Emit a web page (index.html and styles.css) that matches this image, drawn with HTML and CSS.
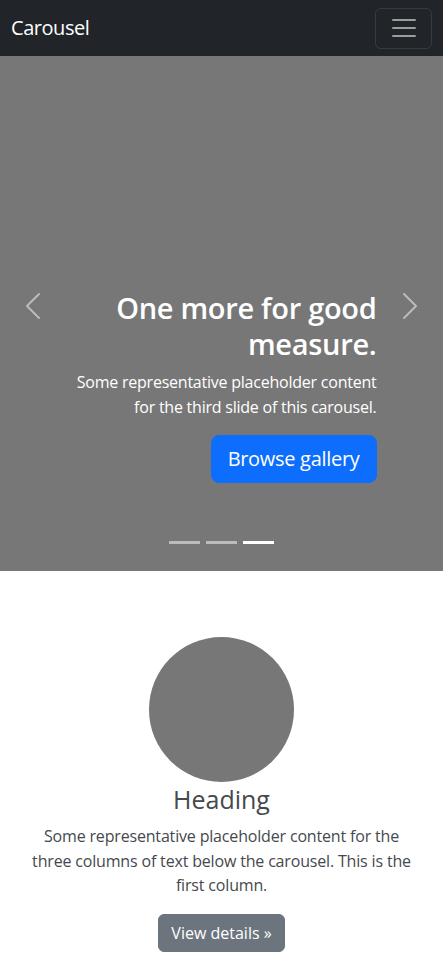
FILE: index.html
```html
<!DOCTYPE html>
<html lang="en">
<head>
<meta charset="utf-8">
<title>Carousel</title>
<link rel="stylesheet" href="styles.css">
</head>
<body>
<header class="navbar">
  <a class="brand" href="#">Carousel</a>
  <button class="toggler" type="button" aria-label="Toggle navigation">
    <svg class="toggler-icon" viewBox="0 0 30 30" width="30" height="30"><path d="M4 7h22M4 15h22M4 23h22" stroke="rgba(255,255,255,0.55)" stroke-width="2" stroke-linecap="round" fill="none"/></svg>
  </button>
</header>
<main>
  <section class="carousel">
    <div class="caption">
      <h1 class="caption-title">One more for good measure.</h1>
      <p class="caption-text">Some representative placeholder content for the third slide of this carousel.</p>
      <a class="btn btn-primary" href="#">Browse gallery</a>
    </div>
    <a class="control control-prev" href="#" aria-label="Previous">
      <svg viewBox="0 0 16 16" width="32" height="32"><path fill="#fff" d="M11.354 1.646a.5.5 0 0 1 0 .708L5.707 8l5.647 5.646a.5.5 0 0 1-.708.708l-6-6a.5.5 0 0 1 0-.708l6-6a.5.5 0 0 1 .708 0z"/></svg>
    </a>
    <a class="control control-next" href="#" aria-label="Next">
      <svg viewBox="0 0 16 16" width="32" height="32"><path fill="#fff" d="M4.646 1.646a.5.5 0 0 1 .708 0l6 6a.5.5 0 0 1 0 .708l-6 6a.5.5 0 0 1-.708-.708L10.293 8 4.646 2.354a.5.5 0 0 1 0-.708z"/></svg>
    </a>
    <div class="indicators">
      <span class="indicator"></span>
      <span class="indicator"></span>
      <span class="indicator active"></span>
    </div>
  </section>
  <section class="marketing">
    <div class="avatar"></div>
    <h2 class="col-title">Heading</h2>
    <p class="col-text">Some representative placeholder content for the three columns of text below the carousel. This is the first column.</p>
    <a class="btn btn-secondary" href="#">View details &raquo;</a>
  </section>
</main>
</body>
</html>
```
FILE: styles.css
```css
* { box-sizing: border-box; }
html, body { margin: 0; padding: 0; }
body {
  font-family: "Open Sans", "Noto Sans", sans-serif;
  font-size: 16px;
  line-height: 1.5;
  color: #212529;
  background: #fff;
  letter-spacing: -0.2px;
}
.navbar {
  height: 56px;
  background: #212529;
  display: flex;
  align-items: center;
  justify-content: space-between;
  padding: 0 11px 0 11px;
}
.brand {
  color: #fff;
  text-decoration: none;
  font-size: 20px;
  line-height: 30px;
  letter-spacing: -0.45px;
}
.toggler {
  width: 57px;
  height: 41px;
  padding: 0;
  border: 1px solid rgba(255,255,255,0.1);
  border-radius: 6px;
  background: transparent;
  display: flex;
  align-items: center;
  justify-content: center;
}
.toggler-icon { display: block; }
.carousel {
  position: relative;
  height: 515px;
  background: #777;
  display: flex;
  flex-direction: column;
  justify-content: flex-end;
  padding: 0 66.5px 88px;
}
.caption {
  display: flex;
  flex-direction: column;
  align-items: flex-end;
  text-align: right;
  color: #fff;
}
.caption-title {
  margin: 0 0 8px;
  font-size: 29px;
  line-height: 36px;
  font-weight: 600;
  letter-spacing: -0.3px;
}
.caption-text {
  margin: 0 0 16px;
  line-height: 24.5px;
  letter-spacing: -0.23px;
}
.btn {
  display: inline-block;
  text-decoration: none;
  color: #fff;
  border: 1px solid transparent;
}
.btn-primary {
  background: #0d6efd;
  border-color: #0d6efd;
  font-size: 20px;
  line-height: 30px;
  padding: 8px 16px;
  border-radius: 8px;
  letter-spacing: -0.3px;
}
.control {
  position: absolute;
  top: 0;
  bottom: 16px;
  width: 15%;
  display: flex;
  align-items: center;
  justify-content: center;
  opacity: 0.5;
}
.control svg { display: block; }
.control-prev { left: 0; }
.control-next { right: 0; }
.indicators {
  position: absolute;
  left: 0;
  right: 0;
  bottom: 27px;
  display: flex;
  justify-content: center;
  gap: 6px;
}
.indicator {
  width: 31px;
  height: 3px;
  background: #fff;
  opacity: 0.5;
}
.indicator.active { opacity: 1; }
.marketing {
  padding: 66px 24px 40px;
  text-align: center;
  color: #45494e;
}
.avatar {
  width: 145px;
  height: 145px;
  border-radius: 50%;
  background: #777;
  margin: 0 auto;
}
.col-title {
  margin: 2px 0 10px;
  font-size: 25px;
  line-height: 30px;
  font-weight: 400;
  letter-spacing: 0;
}
.col-text {
  margin: 0 0 16.5px;
  line-height: 24.5px;
  letter-spacing: -0.17px;
}
.btn-secondary {
  background: #6c757d;
  border-color: #6c757d;
  font-size: 16px;
  line-height: 24px;
  padding: 6px 12px;
  border-radius: 6px;
  letter-spacing: 0;
}
```
